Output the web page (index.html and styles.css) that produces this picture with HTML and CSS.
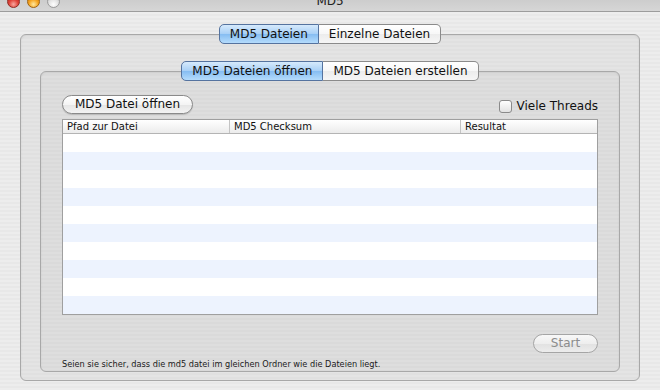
FILE: index.html
```html
<!DOCTYPE html>
<html lang="de">
<head>
    <meta charset="UTF-8">
    <title>MD5</title>
    <link rel="stylesheet" href="styles.css">
</head>
<body>
    <div class="window">
        <div class="titlebar">
            <div class="lights">
                <span class="light red"></span>
                <span class="light yellow"></span>
                <span class="light grey"></span>
            </div>
            <div class="title">MD5</div>
        </div>

        <div class="tabview outer">
            <div class="tabs">
                <span class="tab selected">MD5 Dateien</span>
                <span class="tab">Einzelne Dateien</span>
            </div>
            <div class="tabbox outer-box">

                <div class="tabview inner">
                    <div class="tabs">
                        <span class="tab selected">MD5 Dateien öffnen</span>
                        <span class="tab">MD5 Dateien erstellen</span>
                    </div>
                    <div class="tabbox inner-box">
                        <div class="toolbar">
                            <button class="pill">MD5 Datei öffnen</button>
                            <label class="check"><span class="box"></span>Viele Threads</label>
                        </div>

                        <div class="table">
                            <div class="thead">
                                <span class="col c1">Pfad zur Datei</span>
                                <span class="col c2">MD5 Checksum</span>
                                <span class="col c3">Resultat</span>
                            </div>
                            <div class="row"></div>
                            <div class="row"></div>
                            <div class="row"></div>
                            <div class="row"></div>
                            <div class="row"></div>
                            <div class="row"></div>
                            <div class="row"></div>
                            <div class="row"></div>
                            <div class="row"></div>
                            <div class="row"></div>
                        </div>

                        <div class="actions">
                            <button class="pill disabled">Start</button>
                        </div>
                        <p class="hint">Seien sie sicher, dass die md5 datei im gleichen Ordner wie die Dateien liegt.</p>
                    </div>
                </div>

            </div>
        </div>
    </div>
</body>
</html>
```

FILE: styles.css
```css
body {
    margin: 0;
    font-family: "DejaVu Sans", "Liberation Sans", sans-serif;
    color: #111;
}
.window {
    width: 660px;
    height: 390px;
    overflow: hidden;
    display: flex;
    flex-direction: column;
    background: repeating-linear-gradient(to bottom, #ededed 0, #ededed 2px, #e8e8e8 2px, #e8e8e8 4px);
}

/* title bar, cut off at the top */
.titlebar {
    height: 22px;
    margin-top: -11px;
    flex: none;
    display: flex;
    align-items: center;
    position: relative;
    background: linear-gradient(#c4c4c4, #d6d6d6);
    border-bottom: 1px solid #9c9c9c;
}
.lights {
    display: flex;
    gap: 7px;
    margin-left: 7px;
    margin-top: 2px;
}
.light {
    width: 13px;
    height: 13px;
    border-radius: 50%;
    box-sizing: border-box;
}
.red {
    background: radial-gradient(circle at 50% 75%, #f8a9a0 0, #e0443a 45%, #a3201a 100%);
    border: 1px solid #8f2a22;
}
.yellow {
    background: radial-gradient(circle at 50% 75%, #ffe9a0 0, #f5a623 45%, #c06a00 100%);
    border: 1px solid #a0620c;
}
.grey {
    background: radial-gradient(circle at 50% 75%, #ffffff 0, #e4e4e4 45%, #b5b5b5 100%);
    border: 1px solid #9a9a9a;
}
.title {
    position: absolute;
    left: 0;
    right: 0;
    top: 5px;
    text-align: center;
    font-size: 12px;
    color: #222;
}

/* tab views */
.tabview {
    display: flex;
    flex-direction: column;
}
.tabview.outer {
    flex: 1;
    margin: 12px 20px 9px 20px;
}
.tabview.inner {
    flex: 1;
}
.tabs {
    display: flex;
    justify-content: center;
    height: 20px;
    margin-bottom: -10px;
    position: relative;
    z-index: 1;
}
.tab {
    box-sizing: border-box;
    height: 20px;
    line-height: 18px;
    padding: 0 10px;
    font-size: 12px;
    border: 1px solid #8b8b8b;
    border-left: none;
    background: linear-gradient(#ffffff 0, #f7f7f7 50%, #ececec 51%, #f6f6f6 100%);
    white-space: nowrap;
}
.tab:first-child {
    border-left: 1px solid #8b8b8b;
    border-radius: 5px 0 0 5px;
}
.tab:last-child {
    border-radius: 0 5px 5px 0;
}
.tab.selected {
    border-color: #55739f;
    background: linear-gradient(#d6eafc 0, #a9d0f6 48%, #86bdf2 52%, #b5dcfc 100%);
}
.tabbox {
    flex: 1;
    display: flex;
    flex-direction: column;
    border: 1px solid #a8a8a8;
    border-radius: 6px;
    box-shadow: inset 0 1px 2px rgba(0, 0, 0, 0.08);
}
.outer-box {
    padding: 26px 19px 8px 19px;
    background: repeating-linear-gradient(to bottom, #e4e4e4 0, #e4e4e4 2px, #e0e0e0 2px, #e0e0e0 4px);
}
.inner-box {
    padding: 23px 21px 1px 21px;
    background: repeating-linear-gradient(to bottom, #dedede 0, #dedede 2px, #dadada 2px, #dadada 4px);
}

/* content */
.toolbar {
    display: flex;
    justify-content: space-between;
    align-items: center;
    height: 19px;
}
.pill {
    box-sizing: border-box;
    height: 19px;
    padding: 0;
    font-family: inherit;
    font-size: 12px;
    line-height: 17px;
    white-space: nowrap;
    color: #111;
    border: 1px solid #8a8a8a;
    border-radius: 10px;
    background: linear-gradient(#ffffff 0, #f4f4f4 50%, #e6e6e6 55%, #f3f3f3 100%);
    box-shadow: 0 1px 1px rgba(0, 0, 0, 0.15);
}
.toolbar .pill {
    width: 131px;
}
.check {
    display: flex;
    align-items: center;
    gap: 5px;
    font-size: 12px;
    margin-top: 3px;
}
.box {
    width: 13px;
    height: 13px;
    box-sizing: border-box;
    border: 1px solid #8a8a8a;
    border-radius: 3px;
    background: linear-gradient(#ffffff, #e2e2e2);
}

.table {
    margin-top: 5px;
    border: 1px solid #9f9f9f;
    background: #fff;
}
.thead {
    display: flex;
    height: 13px;
    border-bottom: 1px solid #b4b4b4;
    background: linear-gradient(#ffffff, #ececec);
    font-size: 10px;
    line-height: 13px;
}
.col {
    box-sizing: border-box;
    padding-left: 4px;
    border-right: 1px solid #c4c4c4;
    white-space: nowrap;
}
.c1 { width: 167px; }
.c2 { width: 231px; }
.c3 { flex: 1; border-right: none; }
.row {
    height: 18px;
}
.row:nth-child(odd) {
    background: #edf3fe;
}

.actions {
    display: flex;
    justify-content: flex-end;
    margin-top: 19px;
}
.pill.disabled {
    width: 65px;
    color: #8c8c8c;
    border-color: #a5a5a5;
    background: linear-gradient(#f8f8f8 0, #eeeeee 50%, #e2e2e2 55%, #ececec 100%);
    box-shadow: none;
}
.hint {
    margin: 5px 0 0 0;
    font-size: 8.2px;
    line-height: 12px;
    color: #1a1a1a;
}
```
